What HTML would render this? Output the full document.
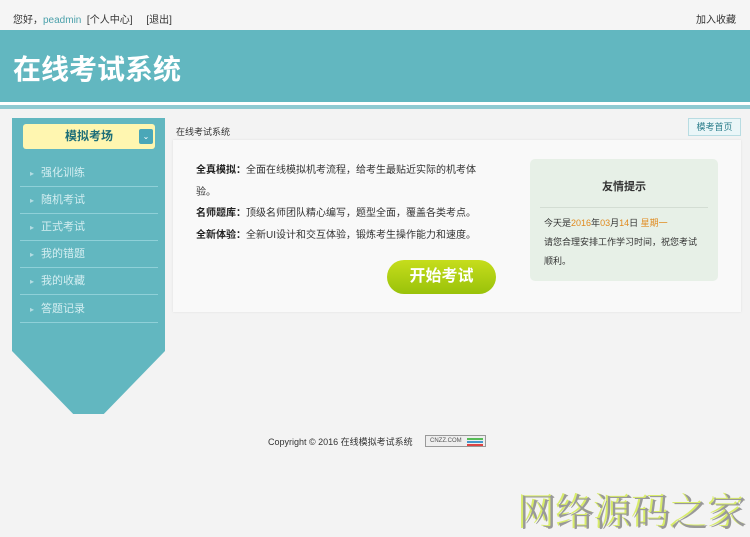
<!DOCTYPE html>
<html><head><meta charset="utf-8"><style>
*{margin:0;padding:0;box-sizing:border-box}
body{width:750px;height:529px;overflow:hidden;background:#f3f3f3;font-family:"Liberation Sans","Noto Sans CJK SC",sans-serif;font-size:10px;color:#333;position:relative}
.abs{position:absolute}
.top{left:0;top:0;width:750px;height:30px;background:#f5f5f5}
.hdr{left:0;top:30px;width:750px;height:72px;background:#62b7c0}
.hdr h1{position:absolute;left:13px;top:20px;color:#fff;font-size:28px;font-weight:bold;line-height:40px}
.strip{left:0;top:102px;width:750px;height:3px;background:#fff}
.strip2{left:0;top:105px;width:750px;height:4px;background:#8fcad2}
.side{left:12px;top:118px;width:153px;height:296px;background:#62b7c0;clip-path:polygon(0 0,100% 0,100% 233px,60% 100%,40% 100%,0 233px)}
.menuh{left:23px;top:124px;width:132px;height:25px;background:#fff6b0;border-radius:3px;text-align:center;line-height:25px;font-size:12px;font-weight:bold;color:#1d6e78}
.arr{left:139px;top:129px;width:14px;height:15px;background:#4aa7b8;border-radius:2px;color:#fff;font-size:8px;text-align:center;line-height:15px}
.item{left:20px;width:138px;height:27px;border-bottom:1px solid #8fd0d8;color:#d4eef1;font-size:11px;line-height:27px;padding-left:21px}
.item:before{content:"▸";position:absolute;left:10px;font-size:8px;color:#b4dde3}
.panel{left:173px;top:140px;width:568px;height:172px;background:#f9f9f9;box-shadow:0 0 2px #ddd}
.txt{left:196px;top:160px;font-size:10px;line-height:21.5px;width:282px;color:#333}
.txt b{color:#222}
.tip{left:530px;top:159px;width:188px;height:122px;background:#e7f0e7;border-radius:5px}
.btn{left:387px;top:260px;width:109px;height:34px;border-radius:17px;background:linear-gradient(#c6dd1c,#99c20a);color:#fff;font-size:16px;font-weight:bold;text-align:center;line-height:34px}
</style></head><body>
<div class="abs top"></div>
<div class="abs" style="left:13px;top:11px;font-size:10px;color:#333">您好，<span style="color:#4aa0aa">peadmin</span> &nbsp;[个人中心] &nbsp; &nbsp; [退出]</div>
<div class="abs" style="left:696px;top:11px;font-size:10px">加入收藏</div>
<div class="abs hdr"><h1>在线考试系统</h1></div>
<div class="abs strip"></div><div class="abs strip2"></div>
<div class="abs side"></div>
<div class="abs menuh">模拟考场</div>
<div class="abs arr">⌄</div>
<div class="abs item" style="top:160px">强化训练</div>
<div class="abs item" style="top:187px">随机考试</div>
<div class="abs item" style="top:214px">正式考试</div>
<div class="abs item" style="top:241px">我的错题</div>
<div class="abs item" style="top:268px">我的收藏</div>
<div class="abs item" style="top:296px">答题记录</div>
<div class="abs" style="left:176px;top:125px;font-size:9px;color:#333">在线考试系统</div>
<div class="abs" style="left:688px;top:118px;width:53px;height:18px;background:#eaf6f8;border:1px solid #b8dce2;color:#2d7f8c;font-size:9px;text-align:center;line-height:16px">模考首页</div>
<div class="abs panel"></div>
<div class="abs txt"><b>全真模拟：</b>全面在线模拟机考流程，给考生最贴近实际的机考体验。<br><b>名师题库：</b>顶级名师团队精心编写，题型全面，覆盖各类考点。<br><b>全新体验：</b>全新UI设计和交互体验，锻炼考生操作能力和速度。</div>
<div class="abs tip">
<div style="text-align:center;margin-top:19px;font-size:11px;font-weight:bold;color:#333">友情提示</div>
<div style="margin:13px 10px 0;border-top:1px solid #d3ddd3"></div>
<div style="padding:6px 14px;font-size:9px;line-height:19px;color:#333">今天是<span style="color:#e08a1e">2016</span>年<span style="color:#e08a1e">03</span>月<span style="color:#e08a1e">14</span>日 <span style="color:#e08a1e">星期一</span><br>请您合理安排工作学习时间，祝您考试顺利。</div>
</div>
<div class="abs btn">开始考试</div>
<div class="abs" style="left:268px;top:435px;font-size:9px;color:#333">Copyright © 2016 在线模拟考试系统</div>
<div class="abs" style="left:425px;top:435px;width:61px;height:12px;border:1px solid #999;background:#eee;font-size:6px;line-height:10px;padding-left:4px;color:#555">CNZZ.COM<span style="position:absolute;right:2px;top:2px;width:16px;height:2px;background:#5b5"></span><span style="position:absolute;right:2px;top:5px;width:16px;height:2px;background:#49c"></span><span style="position:absolute;right:2px;top:8px;width:16px;height:2px;background:#d44"></span></div>
<div class="abs" style="left:519px;top:485px;font-family:'Noto Serif CJK SC',serif;font-size:38px;line-height:50px;color:#999;text-shadow:-2px -1px 0 #d8ec6a;white-space:nowrap">网络源码之家</div>
</body></html>
